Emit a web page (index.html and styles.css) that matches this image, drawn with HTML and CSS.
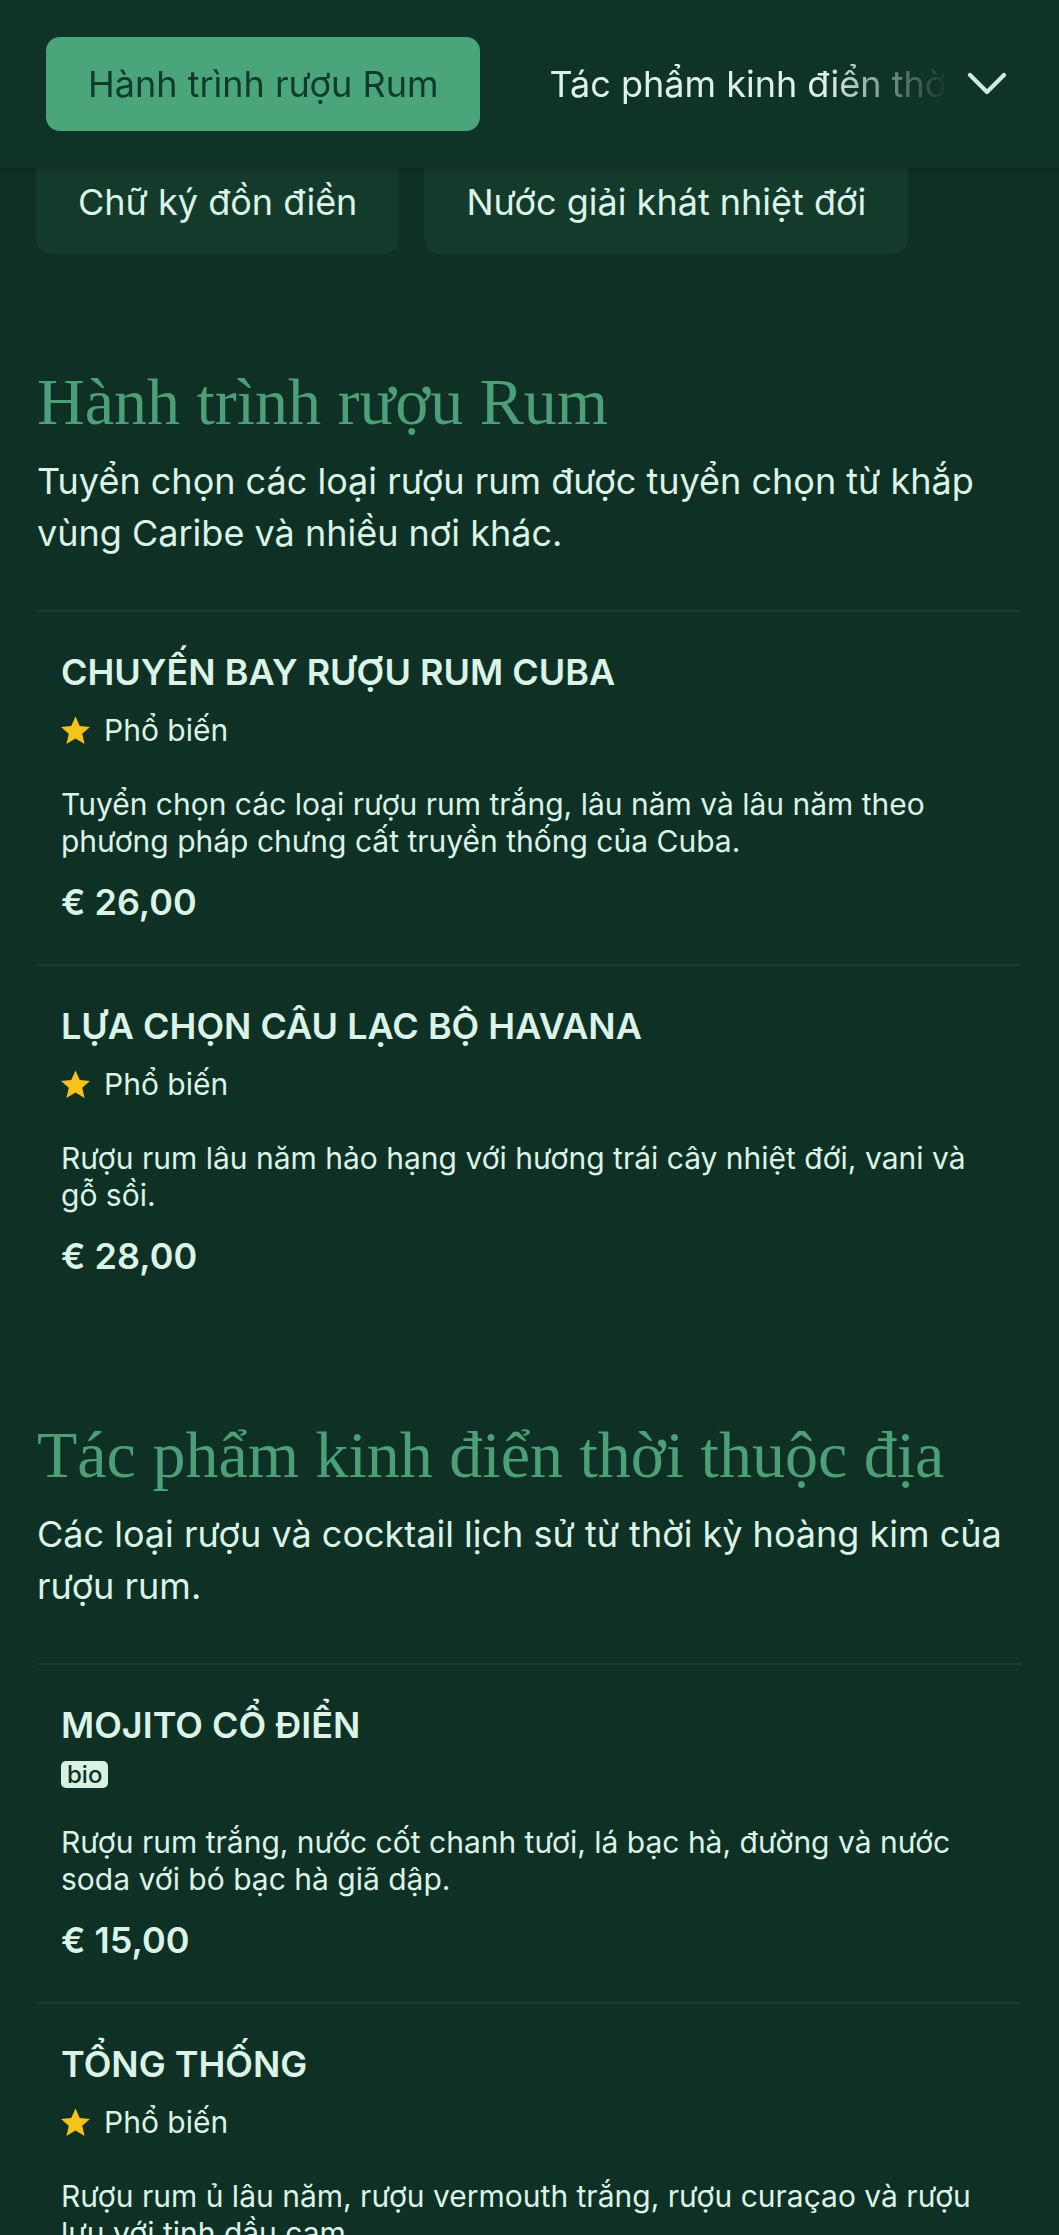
FILE: index.html
```html
<!DOCTYPE html>
<html lang="vi">
<head>
<meta charset="utf-8">
<title>Menu</title>
<link rel="stylesheet" href="styles.css">
</head>
<body>
<header class="topbar">
  <nav class="tabs">
    <a class="tab active">Hành trình rượu Rum</a>
    <a class="tab">Tác phẩm kinh điển thời thuộc địa</a>
    <a class="tab">Chữ ký đồn điền</a>
  </nav>
  <button class="more" aria-label="Thêm">
    <svg width="40" height="24" viewBox="0 0 40 24"><polyline points="3,3 20,20 37,3" fill="none" stroke="currentColor" stroke-width="4.2" stroke-linecap="round" stroke-linejoin="round"/></svg>
  </button>
</header>
<div class="subtabs">
  <span class="subtab">Chữ ký đồn điền</span>
  <span class="subtab">Nước giải khát nhiệt đới</span>
</div>
<main class="content">
  <section class="menu-section">
    <h2 class="section-title">Hành trình rượu Rum</h2>
    <p class="section-desc">Tuyển chọn các loại rượu rum được tuyển chọn từ khắp vùng Caribe và nhiều nơi khác.</p>
    <ul class="items">
      <li class="item">
        <h3 class="item-name">CHUYẾN BAY RƯỢU RUM CUBA</h3>
        <div class="item-meta"><svg class="star" viewBox="0 0 24 24"><path d="M12 1.8l3.1 6.9 7.4.7-5.6 5 1.7 7.4L12 17.9l-6.6 3.9 1.7-7.4-5.6-5 7.4-.7z" fill="#f7c21b"/></svg><span>Phổ biến</span></div>
        <p class="item-desc">Tuyển chọn các loại rượu rum trắng, lâu năm và lâu năm theo phương pháp chưng cất truyền thống của Cuba.</p>
        <div class="price">€ 26,00</div>
      </li>
      <li class="item">
        <h3 class="item-name">LỰA CHỌN CÂU LẠC BỘ HAVANA</h3>
        <div class="item-meta"><svg class="star" viewBox="0 0 24 24"><path d="M12 1.8l3.1 6.9 7.4.7-5.6 5 1.7 7.4L12 17.9l-6.6 3.9 1.7-7.4-5.6-5 7.4-.7z" fill="#f7c21b"/></svg><span>Phổ biến</span></div>
        <p class="item-desc">Rượu rum lâu năm hảo hạng với hương trái cây nhiệt đới, vani và gỗ sồi.</p>
        <div class="price">€ 28,00</div>
      </li>
    </ul>
  </section>
  <section class="menu-section">
    <h2 class="section-title">Tác phẩm kinh điển thời thuộc địa</h2>
    <p class="section-desc">Các loại rượu và cocktail lịch sử từ thời kỳ hoàng kim của rượu rum.</p>
    <ul class="items">
      <li class="item">
        <h3 class="item-name">MOJITO CỔ ĐIỂN</h3>
        <div class="item-tags"><span class="badge">bio</span></div>
        <p class="item-desc">Rượu rum trắng, nước cốt chanh tươi, lá bạc hà, đường và nước soda với bó bạc hà giã dập.</p>
        <div class="price">€ 15,00</div>
      </li>
      <li class="item">
        <h3 class="item-name">TỔNG THỐNG</h3>
        <div class="item-meta"><svg class="star" viewBox="0 0 24 24"><path d="M12 1.8l3.1 6.9 7.4.7-5.6 5 1.7 7.4L12 17.9l-6.6 3.9 1.7-7.4-5.6-5 7.4-.7z" fill="#f7c21b"/></svg><span>Phổ biến</span></div>
        <p class="item-desc">Rượu rum ủ lâu năm, rượu vermouth trắng, rượu curaçao và rượu lựu với tinh dầu cam.</p>
        <div class="price">€ 22,00</div>
      </li>
    </ul>
  </section>
</main>
</body>
</html>
```
FILE: styles.css
```css
html, body {
  margin: 0;
  padding: 0;
}
body {
  background: #0f3024;
  color: #dcf3e7;
  font-family: Inter, "Noto Sans", sans-serif;
  overflow: hidden;
}
.topbar {
  display: flex;
  align-items: center;
  gap: 14px;
  height: 168px;
  box-sizing: border-box;
  padding: 0 47px 0 46px;
  background: #103327;
  box-shadow: 0 2px 6px rgba(0, 0, 0, 0.18);
  position: relative;
  z-index: 2;
}
.tabs {
  flex: 1;
  min-width: 0;
  display: flex;
  gap: 27px;
  overflow: hidden;
  -webkit-mask-image: linear-gradient(to right, #000 calc(100% - 120px), transparent 100%);
  mask-image: linear-gradient(to right, #000 calc(100% - 120px), transparent 100%);
}
.tab {
  flex: none;
  display: flex;
  align-items: center;
  height: 94px;
  padding: 0 42px;
  border-radius: 14px;
  font-size: 36px;
  white-space: nowrap;
  color: #dcf3e7;
}
.tab.active {
  background: #4ba57b;
  color: #103a2b;
}
.more {
  flex: none;
  width: 50px;
  height: 94px;
  display: flex;
  align-items: center;
  justify-content: center;
  padding: 0;
  border: 0;
  background: transparent;
  color: #cdeedd;
}
.subtabs {
  display: flex;
  gap: 25px;
  height: 86px;
  padding: 0 36px;
}
.subtab {
  background: #143a2c;
  border-radius: 0 0 16px 16px;
  padding: 14px 42px 0;
  font-size: 36px;
  line-height: 40px;
  white-space: nowrap;
}
.content {
  padding: 11px 37px 0;
}
.menu-section {
  margin-top: 100px;
}
.section-title {
  margin: 0 0 16px;
  font-family: "Liberation Serif", serif;
  font-weight: 400;
  font-size: 66px;
  line-height: 74px;
  color: #4c9f78;
}
.section-desc {
  margin: 0 0 51px;
  font-size: 36px;
  line-height: 52px;
}
.items {
  list-style: none;
  margin: 0;
  padding: 0;
}
.item {
  border-top: 2px solid #173d30;
  padding: 38px 40px 40px 24px;
}
.item-name {
  margin: 0;
  font-size: 36px;
  font-weight: 600;
  line-height: 44px;
}
.item-meta {
  margin-top: 16px;
  display: flex;
  align-items: center;
  gap: 12px;
  font-size: 30px;
  line-height: 40px;
}
.star {
  width: 33px;
  height: 33px;
  margin-left: -2px;
}
.item-tags {
  margin-top: 14px;
  display: flex;
}
.badge {
  font-size: 24px;
  line-height: 27px;
  padding: 0 6px;
  border-radius: 5px;
  background: #d7f1e4;
  color: #0f3024;
  font-weight: 500;
}
.item-desc {
  margin: 36px 0 0;
  font-size: 30px;
  line-height: 37px;
}
.item-tags + .item-desc {
  margin-top: 36px;
}
.price {
  margin-top: 20px;
  font-size: 36px;
  font-weight: 600;
  line-height: 44px;
}
```
